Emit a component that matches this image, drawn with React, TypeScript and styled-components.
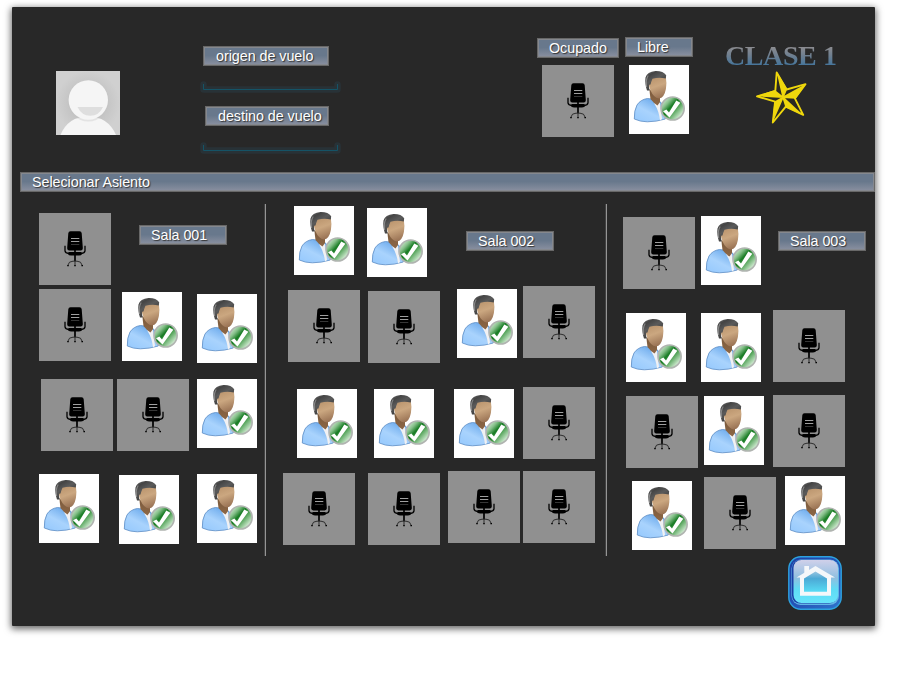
import React from 'react';
import styled, { createGlobalStyle } from 'styled-components';

const GlobalStyle = createGlobalStyle`
  body { margin: 0; background: #fff; font-family: "Liberation Sans", Arial, sans-serif; }
  *, *::before, *::after { box-sizing: border-box; }
  svg { display: block; }
`;

const Page = styled.div`
  width: 900px;
  height: 700px;
  padding: 7px 0 0 12px;
  background: #fff;
`;

const Panel = styled.main`
  width: 863px;
  height: 619px;
  background: #282828;
  border-radius: 1px;
  box-shadow: 0 2px 7px 1px rgba(0, 0, 0, 0.6);
`;

const Header = styled.header`
  display: flex;
  align-items: flex-start;
  height: 165px;
`;

const Avatar = styled.div`
  width: 64px;
  height: 64px;
  margin: 64px 0 0 44px;
`;

const Column = styled.div<{ $left: number; $top: number; $width: number }>`
  display: flex;
  flex-direction: column;
  align-items: flex-start;
  flex: none;
  width: ${(p) => p.$width}px;
  margin: ${(p) => p.$top}px 0 0 ${(p) => p.$left}px;
`;

const Label = styled.div<{ $width?: number; $left?: number; $top?: number; $indent?: number }>`
  flex: none;
  width: ${(p) => p.$width ?? 88}px;
  height: 20px;
  margin: ${(p) => p.$top ?? 0}px 0 0 ${(p) => p.$left ?? 0}px;
  padding-left: ${(p) => p.$indent ?? 11}px;
  border: 1px solid #686868;
  box-shadow: inset 0 0 0 1px #85888e;
  background: linear-gradient(#68788c 0%, #68788c 48%, #8a90a0 100%);
  color: #fff;
  font-size: 14.3px;
  line-height: 18px;
  letter-spacing: -0.03px;
  white-space: nowrap;
  text-shadow: 1px 1px 1px #333;
`;

const SectionBar = styled(Label)`
  width: 855px;
  margin-left: 8px;
`;

const Field = styled.div<{ $top: number }>`
  width: 141px;
  height: 12px;
  margin-top: ${(p) => p.$top}px;
`;

const Slot = styled.div<{ $left: number; $top: number }>`
  flex: none;
  margin: ${(p) => p.$top}px 0 0 ${(p) => p.$left}px;
`;

const ClassTitle = styled.h1`
  margin: 0;
  font: bold 28px/32px "Liberation Serif", "Times New Roman", serif;
  letter-spacing: -0.4px;
  white-space: nowrap;
  color: transparent;
  background: linear-gradient(#8c8c90 22%, #6f7f90 48%, #41749c 82%);
  background-clip: text;
  -webkit-background-clip: text;
`;

const Rooms = styled.section`
  display: grid;
  grid-template-columns: 252px 341px 270px;
  height: 364px;
  padding-top: 12px;
`;

const Room = styled.div<{ $top: number; $rows: string; $divided: boolean }>`
  display: grid;
  grid-template-rows: ${(p) => p.$rows};
  height: 352px;
  padding-top: ${(p) => p.$top}px;
  border-left: ${(p) => (p.$divided ? '2px groove #959595' : '0')};
`;

const Row = styled.div`
  display: flex;
  align-items: flex-start;
`;

const TakenBox = styled.div`
  width: 72px;
  height: 72px;
  background: #909090;
`;

const FreeBox = styled.div`
  width: 60px;
  height: 69px;
  background: #fff;
`;

const Footer = styled.footer`
  display: flex;
  justify-content: flex-end;
  padding-right: 33px;
`;

const HomeButton = styled.button`
  width: 54px;
  height: 54px;
  padding: 0;
  border: 0;
  background: none;
`;

const Taken = () => (
  <TakenBox>
    <svg width="72" height="72" viewBox="0 0 72 72">
      <path d="M31.5 18.3h9q2 0 2.200 2l1.100 14.500q.1 2.700-2.100 2.700h-11.400q-2.200 0-2.100-2.700l1.100-14.500q.2-2 2.200-2z" fill="#000" />
      <path d="M32 25.500h8.300M32 28.500h8.300" stroke="#a0a0a0" strokeWidth="1" />
      <path d="M32 31.500h8.300" stroke="#444" strokeWidth="0.8" />
      <path d="M30 39h12l1.500 1.500q-1 2-3.500 2h-8q-2.500 0-3.500-2z" fill="#000" />
      <path d="M26 32.800v5q.3 2.200 4 2.700M46 32.800v5q-.3 2.200-4 2.700" fill="none" stroke="#000" strokeWidth="1.300" />
      <path d="M36 37v11" stroke="#000" strokeWidth="1.700" />
      <path d="M36 47v5M29 52q.6-3.800 5-3.800h4q4.400 0 5 3.800" fill="none" stroke="#222" strokeWidth="0.9" />
      <path d="M28.200 52.600h1.600M35.200 52.600h1.600M42.400 52.600h1.600" stroke="#000" strokeWidth="1.300" />
    </svg>
  </TakenBox>
);

const Defs = () => (
  <svg width="0" height="0">
    <defs>
      <linearGradient id="shirt" x1="0" y1="1" x2="0.7" y2="0">
        <stop offset="0" stopColor="#94c8fd" />
        <stop offset="0.5" stopColor="#a9d3fd" />
        <stop offset="1" stopColor="#66a6ea" />
      </linearGradient>
      <linearGradient id="skin" x1="0.3" y1="0" x2="0.6" y2="1">
        <stop offset="0" stopColor="#b9936c" />
        <stop offset="0.45" stopColor="#cba780" />
        <stop offset="1" stopColor="#987153" />
      </linearGradient>
      <linearGradient id="neck" x1="0" y1="0" x2="0" y2="1">
        <stop offset="0" stopColor="#7b5a3c" />
        <stop offset="1" stopColor="#8d6746" />
      </linearGradient>
      <linearGradient id="hair" x1="0" y1="0" x2="0.6" y2="1">
        <stop offset="0" stopColor="#777" />
        <stop offset="0.25" stopColor="#444" />
        <stop offset="0.5" stopColor="#5a5a5a" />
        <stop offset="1" stopColor="#303030" />
      </linearGradient>
      <linearGradient id="badge" x1="0.1" y1="0.1" x2="0.9" y2="0.85">
        <stop offset="0" stopColor="#d4ead4" />
        <stop offset="0.22" stopColor="#86c08a" />
        <stop offset="0.42" stopColor="#187c24" />
        <stop offset="0.6" stopColor="#4a9e50" />
        <stop offset="1" stopColor="#e6f6e6" />
      </linearGradient>
      <linearGradient id="homeFill" x1="0" y1="0" x2="0" y2="1">
        <stop offset="0" stopColor="#d0d0ea" />
        <stop offset="0.42" stopColor="#8fbfe0" />
        <stop offset="0.68" stopColor="#5fdcf5" />
        <stop offset="1" stopColor="#68e4fb" />
      </linearGradient>
      <linearGradient id="homeInner" x1="0" y1="0" x2="0" y2="1">
        <stop offset="0" stopColor="#a4c8e2" />
        <stop offset="0.38" stopColor="#4ca9d5" />
        <stop offset="1" stopColor="#58dcf5" />
      </linearGradient>
      <linearGradient id="homeEdge" x1="0" y1="0" x2="1" y2="1">
        <stop offset="0" stopColor="#1d3fa4" />
        <stop offset="0.45" stopColor="#2350b4" />
        <stop offset="1" stopColor="#2f74cc" />
      </linearGradient>
      <radialGradient id="avatarBg">
        <stop offset="0.5" stopColor="#c2c2c2" />
        <stop offset="1" stopColor="#d0d0d0" />
      </radialGradient>
    </defs>
  </svg>
);

const Free = () => (
  <FreeBox>
    <svg width="60" height="69" viewBox="0 0 60 69">
      <path d="M18.500 33.500q-7 1-10.500 6.500-3 5.500-2.700 14 6 2.800 13 2.800 9 0 18-2.800V42l-7-7z" fill="url(#shirt)" stroke="#5a8cc4" strokeWidth="0.800" />
      <path d="M25.500 38l5.500-.500 2 16.500-2 1.500Q30 46 25.500 39z" fill="#f1f1f3" />
      <path d="M20.300 24l10.700 8v5l-2.500 3.500Q25 38.500 21.500 34z" fill="url(#neck)" />
      <path d="M20 13.500q6-3.500 16.800-1.500 1.200 6 .1 12-1.700 9-6.900 9.500-5.500-1-8.500-8Q19 19.500 20 13.500z" fill="url(#skin)" />
      <path d="M18 25.500q-2.400-7-1.500-13Q18 6.500 26.500 5.900q8-.1 10.700 4.400l-.4 3.200q-6.500-1.700-13.300.2-1.400 3-2 5.800-1.300-.4-1.500.9-.1 2.800.7 5.100z" fill="url(#hair)" />
      <path d="M17.600 22q-1.200-7 1.600-11.500" stroke="#aaa" strokeWidth="1.100" fill="none" opacity=".65" />
      <circle cx="43.600" cy="43.500" r="11.500" fill="url(#badge)" stroke="#b0b4b0" strokeWidth="1.700" />
      <path d="M34 46.300l3.400-1.700 2.600 3L47.300 35.600l4 2.100L40.500 52.600z" fill="#fff" />
    </svg>
  </FreeBox>
);

type Item = { kind: 'taken' | 'free' | 'label'; left: number; top: number; text?: string };
const T = (left: number, top = 0): Item => ({ kind: 'taken', left, top });
const F = (left: number, top = 0): Item => ({ kind: 'free', left, top });
const L = (left: number, top: number, text: string): Item => ({ kind: 'label', left, top, text });

const rooms: { top: number; rows: string; seats: Item[][] }[] = [
  {
    top: 9,
    rows: '76px 90px 95px 72px',
    seats: [
      [T(27), L(28, 12, 'Sala 001')],
      [T(27), F(11, 3), F(15, 5)],
      [T(29), T(4), F(8)],
      [F(27), F(20, 1), F(18)],
    ],
  },
  {
    top: 2,
    rows: '80px 101px 84px 74px',
    seats: [
      [F(28), F(13, 2), L(39, 25, 'Sala 002')],
      [T(22, 4), T(8, 5), F(17, 3), T(6)],
      [F(31, 2), F(17, 2), F(20, 2), T(9)],
      [T(17, 2), T(13, 2), T(8), T(3)],
    ],
  },
  {
    top: 12,
    rows: '94px 85px 81px 74px',
    seats: [
      [T(16, 1), F(6), L(17, 15, 'Sala 003')],
      [F(19, 3), F(15, 3), T(12)],
      [T(19, 1), F(6, 1), T(9)],
      [F(25, 5), T(12, 1), F(9)],
    ],
  },
];

const Bracket = () => (
  <svg width="141" height="12" viewBox="0 0 141 12">
    <path d="M3.500 3.500v5h134v-5" fill="none" stroke="#283237" strokeWidth="6.500" strokeLinejoin="round" strokeLinecap="round" />
    <path d="M3.500 3v5.500h134V3" fill="none" stroke="#155366" strokeWidth="1" />
  </svg>
);

const Star = () => (
  <svg width="54" height="56" viewBox="754 70 54 56">
    <path
      d="M776.700 72.500L786.600 89.500 805.500 84.200 794.900 98.400 803.200 114.900 785.800 106.600 772.800 122.500 775.100 101.600 757 96.400 775.300 90.900z"
      fill="#2b2a22" stroke="#efd70c" strokeWidth="1.900" strokeLinejoin="round"
    />
    <path
      d="M782.300 97.300L776.500 71.500 787.300 89.100 783.700 97.500zM783 96.500L806 83.800 795.600 98.700 782.700 98zM783.700 97L803.700 115.500 785.400 107.300 782.300 97.600zM783.600 97.800L772.400 123.300 774.400 101.600 782.700 96.700zM783 98L756 96.300 774.900 90.100 783.500 96.800z"
      fill="#efd70c"
    />
  </svg>
);

const Home = () => (
  <svg width="54" height="54" viewBox="0 0 54 54">
    <rect x="0.800" y="0.800" width="52.400" height="52.400" rx="12" fill="url(#homeEdge)" stroke="#2da2df" strokeWidth="1.400" />
    <rect x="3.500" y="3.500" width="47.500" height="45.500" rx="9" fill="#62b5e6" />
    <rect x="4" y="4" width="45" height="43.500" rx="8" fill="#1a3fa6" />
    <rect x="5.500" y="4" width="44.500" height="43" rx="8" fill="url(#homeFill)" />
    <path d="M27.500 14.500L16 22v14h23V22z" fill="url(#homeInner)" />
    <path d="M8.500 21.500L27.500 10 47 21.500h-4V39.700H12V21.500zM27.500 15.500L16 22.500v13.200h23V22.500z" fill="#f5f7fa" fillRule="evenodd" />
    <path d="M16.300 10H21v5l-4.700 3z" fill="#f5f7fa" />
  </svg>
);

export default function App() {
  return (
    <Page>
      <GlobalStyle />
      <Panel>
        <Header>
          <Avatar>
            <svg width="64" height="64" viewBox="0 0 64 64">
              <rect width="64" height="64" fill="url(#avatarBg)" />
              <path d="M4.500 64Q12 45.500 32 45.500T60 64z" fill="#f5f5f5" />
              <circle cx="32.300" cy="30" r="20.500" fill="#c4c4c4" opacity=".35" />
              <circle cx="32.300" cy="29" r="19.700" fill="#f5f5f5" />
              <path d="M21.500 36H47q-4 8.700-12.700 8.700T21.500 36z" fill="#dedede" />
            </svg>
          </Avatar>
          <Column $left={80} $top={39} $width={141}>
            <Label $width={126} $left={3} $indent={12}>origen de vuelo</Label>
            <Field $top={15}><Bracket /></Field>
            <Label $width={124} $left={5} $top={13} $indent={12}>destino de vuelo</Label>
            <Field $top={16}><Bracket /></Field>
          </Column>
          <Column $left={196} $top={31} $width={82}>
            <Label $width={82}>Ocupado</Label>
            <Slot $left={5} $top={7}><Taken /></Slot>
          </Column>
          <Column $left={6} $top={30} $width={68}>
            <Label $width={68}>Libre</Label>
            <Slot $left={4} $top={8}><Free /></Slot>
          </Column>
          <Column $left={32} $top={33} $width={115}>
            <ClassTitle>CLASE 1</ClassTitle>
            <Slot $left={29} $top={-2}><Star /></Slot>
          </Column>
        </Header>
        <SectionBar>Selecionar Asiento</SectionBar>
        <Rooms>
          {rooms.map((room, i) => (
            <Room key={i} $top={room.top} $rows={room.rows} $divided={i > 0}>
              {room.seats.map((row, r) => (
                <Row key={r}>
                  {row.map((s, k) =>
                    s.kind === 'label' ? (
                      <Label key={k} $left={s.left} $top={s.top}>{s.text}</Label>
                    ) : (
                      <Slot key={k} $left={s.left} $top={s.top}>
                        {s.kind === 'taken' ? <Taken /> : <Free />}
                      </Slot>
                    ),
                  )}
                </Row>
              ))}
            </Room>
          ))}
        </Rooms>
        <Footer>
          <HomeButton aria-label="Inicio"><Home /></HomeButton>
        </Footer>
      </Panel>
      <Defs />
    </Page>
  );
}
